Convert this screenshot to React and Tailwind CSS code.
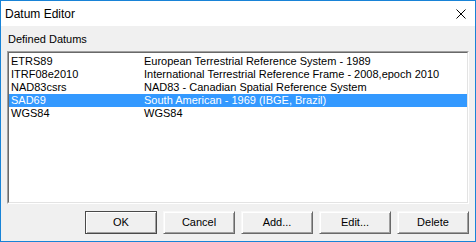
import { useState } from 'react'

const datums = [
  { code: 'ETRS89', name: 'European Terrestrial Reference System - 1989' },
  { code: 'ITRF08e2010', name: 'International Terrestrial Reference Frame - 2008,epoch 2010' },
  { code: 'NAD83csrs', name: 'NAD83 - Canadian Spatial Reference System' },
  { code: 'SAD69', name: 'South American - 1969 (IBGE, Brazil)' },
  { code: 'WGS84', name: 'WGS84' },
]

function Button({ children, isDefault }) {
  return (
    <button
      className={
        'w-[72px] h-[23px] bg-[#f0f0f0] text-[11px] leading-none text-black ' +
        (isDefault
          ? 'border border-[#4a4a4a] shadow-[inset_1px_1px_0_#ffffff,inset_-1px_-1px_0_#a0a0a0]'
          : 'border border-t-[#f8f8f8] border-l-[#f8f8f8] border-r-[#696969] border-b-[#696969] shadow-[inset_1px_1px_0_#ffffff,inset_-1px_-1px_0_#a0a0a0]')
      }
    >
      {children}
    </button>
  )
}

export default function App() {
  const [selected, setSelected] = useState('SAD69')

  return (
    <div
      className="w-[476px] h-[242px] border border-[#1883d7] bg-[#f0f0f0] flex flex-col text-black"
      style={{ fontFamily: '"Liberation Sans", Arial, sans-serif' }}
    >
      <div className="h-[25px] bg-white flex items-center justify-between pl-[4px] pr-[9px]">
        <span className="text-[12px]">Datum Editor</span>
        <svg width="10" height="10" viewBox="0 0 10 10" className="mt-[1px]">
          <path d="M0.5 0.5L9.5 9.5M9.5 0.5L0.5 9.5" stroke="#000" strokeWidth="1" />
        </svg>
      </div>

      <div className="flex-1 flex flex-col px-[6px] pt-[7px]">
        <div className="text-[11px] leading-[13px] pl-[1px]">Defined Datums</div>

        <div className="mt-[5px] h-[153px] border border-t-[#a0a0a0] border-l-[#a0a0a0] border-r-white border-b-white">
          <div className="h-full bg-white border border-t-[#696969] border-l-[#696969] border-r-[#e3e3e3] border-b-[#e3e3e3] pt-[2px]">
            {datums.map((d) => {
              const isSel = d.code === selected
              return (
                <div
                  key={d.code}
                  onClick={() => setSelected(d.code)}
                  className={
                    'h-[13px] flex items-center text-[11px] leading-[13px] pl-[2px] whitespace-nowrap ' +
                    (isSel ? 'bg-[#3399ff] text-white' : '')
                  }
                >
                  <span className="w-[133px] shrink-0">{d.code}</span>
                  <span>{d.name}</span>
                </div>
              )
            })}
          </div>
        </div>

        <div className="flex justify-end gap-[6px] mt-[7px]">
          <Button isDefault>OK</Button>
          <Button>Cancel</Button>
          <Button>Add...</Button>
          <Button>Edit...</Button>
          <Button>Delete</Button>
        </div>
      </div>
    </div>
  )
}
